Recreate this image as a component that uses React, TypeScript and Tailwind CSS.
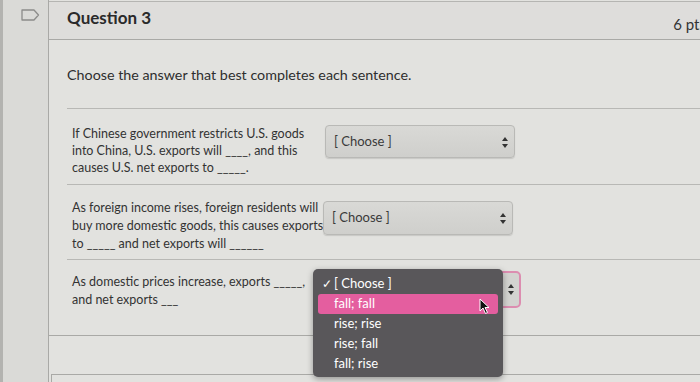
import React from "react";

const font = { fontFamily: "Lato, 'Open Sans', sans-serif" };

function Arrows() {
  return (
    <svg width="6" height="11" viewBox="0 0 6 11" className="shrink-0">
      <path d="M3 0 L6 4 L0 4 Z" fill="#333" />
      <path d="M3 11 L6 7 L0 7 Z" fill="#333" />
    </svg>
  );
}

function Select({ h }: { h: string }) {
  return (
    <div
      className={`w-[190px] ${h} rounded-[4px] border border-[#b9b9b6] bg-gradient-to-b from-[#d9d9d6] to-[#cfcfcc] shadow-[0_1px_1px_rgba(0,0,0,0.12)] flex items-start justify-between pl-[8px] pr-[6px] pt-[7px]`}
    >
      <span className="text-[13px] text-[#3a3a3a] leading-[16px]">[ Choose ]</span>
      <span className="mt-[4px]">
        <Arrows />
      </span>
    </div>
  );
}

export default function App() {
  return (
    <div
      className="w-[700px] h-[382px] overflow-hidden flex bg-[#e2e2df] text-[#353535]"
      style={font}
    >
      {/* left strip */}
      <div className="w-[49px] shrink-0 bg-[#dadad7] border-l-[3px] border-[#b3b3b0] border-r border-r-[#a9a9a6] pt-[9px] pl-[18px]">
        <svg width="19" height="12" viewBox="0 0 19 12">
          <path
            d="M1 1 H13 L17.5 6 L13 11 H1 Z"
            fill="none"
            stroke="#8c8c8a"
            strokeWidth="1.3"
            strokeLinejoin="round"
          />
        </svg>
      </div>

      <div className="flex-1 flex flex-col min-w-0">
        {/* header */}
        <div className="h-[39px] shrink-0 mt-[1px] border-t border-[#b5b5b2] border-b border-b-[#a9a9a6] bg-[#dedddb] flex items-center pl-[18px]">
          <span className="text-[17px] font-bold text-[#2a2a2a] mt-[-6px]">Question 3</span>
          <span className="ml-auto mr-[-6px] mt-[8px] text-[15px] text-[#333] whitespace-nowrap">6 pts</span>
        </div>

        {/* body */}
        <div className="h-[296px] shrink-0 border-b border-[#a9a9a6] flex flex-col pl-[18px]">
          <div className="pt-[26px] h-[68px] text-[14.3px] text-[#2e2e2e] leading-[18px] whitespace-nowrap">
            Choose the answer that best completes each sentence.
          </div>

          {/* row 1 */}
          <div className="h-[76px] border-t border-[#b8b8b5] flex pl-[5px] pt-[15px]">
            <div className="w-[253px] text-[12.5px] leading-[17px] pt-[1px] text-[#333] whitespace-nowrap">
              If Chinese government restricts U.S. goods
              <br />
              into China, U.S. exports will ____, and this
              <br />
              causes U.S. net exports to _____.
            </div>
            <div className="mt-[1px]">
              <Select h="h-[33px]" />
            </div>
          </div>

          {/* row 2 */}
          <div className="h-[75px] border-t border-[#b8b8b5] flex pl-[5px] pt-[13px]">
            <div className="w-[251px] text-[12.5px] leading-[18px] pt-[1px] text-[#333] whitespace-nowrap">
              As foreign income rises, foreign residents will
              <br />
              buy more domestic goods, this causes exports
              <br />
              to _____ and net exports will ______
            </div>
            <div className="mt-[3px]">
              <Select h="h-[34px]" />
            </div>
          </div>

          {/* row 3 */}
          <div className="flex-1 border-t border-[#b8b8b5] flex pl-[5px] pt-[13px] relative">
            <div className="w-[251px] text-[12.5px] leading-[18px] text-[#333] whitespace-nowrap">
              As domestic prices increase, exports _____,
              <br />
              and net exports ___
            </div>
            <div className="mt-[-2px] ml-[4px] w-[194px] h-[37px] rounded-[5px] border-2 border-[#dc8db0] bg-[#d3d3d0] flex items-center justify-end pr-[5px]">
              <Arrows />
            </div>

            {/* dropdown overlay */}
            <div className="absolute left-[246px] top-[9px] w-[190px] h-[108px] rounded-[5px] bg-[#59575a] shadow-[0_2px_6px_rgba(0,0,0,0.35)] pt-[5px] px-[5px] text-white text-[13px] z-10">
              <div className="h-[20px] flex items-center pl-[4px]">
                <span className="w-[12px] text-[12px]">✓</span>
                <span>[ Choose ]</span>
              </div>
              <div className="h-[20px] flex items-center pl-[16px] rounded-[3px] bg-[#e45e9f] relative">
                fall; fall
                <svg
                  width="12"
                  height="17"
                  viewBox="0 0 12 17"
                  className="absolute left-[161px] top-[4px]"
                >
                  <path
                    d="M1 1 L1 13 L4 10 L6.5 15.5 L8.5 14.5 L6 9.5 L10 9.5 Z"
                    fill="#111"
                    stroke="#fff"
                    strokeWidth="1"
                    strokeLinejoin="round"
                  />
                </svg>
              </div>
              <div className="h-[20px] flex items-center pl-[16px]">rise; rise</div>
              <div className="h-[20px] flex items-center pl-[16px]">rise; fall</div>
              <div className="h-[20px] flex items-center pl-[16px]">fall; rise</div>
            </div>
          </div>
        </div>

        {/* next question */}
        <div className="mt-[38px] h-[20px] ml-[2px] border-t border-l border-[#a9a9a6]"></div>
      </div>
    </div>
  );
}
